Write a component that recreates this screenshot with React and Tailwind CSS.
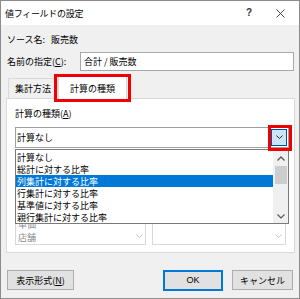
import React from 'react';

const items = ['計算なし', '総計に対する比率', '列集計に対する比率', '行集計に対する比率', '基準値に対する比率', '親行集計に対する比率'];

const Chevron = ({ color = '#333', size = 8 }) => (
  <svg width={size} height={size / 2 + 1} viewBox="0 0 8 5">
    <path d="M0.5 0.5 L4 4 L7.5 0.5" fill="none" stroke={color} strokeWidth="1.1" />
  </svg>
);

const ChevronUp = ({ color = '#333' }) => (
  <svg width="8" height="5" viewBox="0 0 8 5">
    <path d="M0.5 4.5 L4 1 L7.5 4.5" fill="none" stroke={color} strokeWidth="1.3" />
  </svg>
);

const App = () => {
  return (
    <div
      className="relative w-[300px] h-[299px] overflow-hidden border border-[#8c8c8c] bg-[#f0f0f0] text-[9px] leading-none text-black"
      style={{ fontFamily: "'Noto Sans CJK JP', 'Noto Sans', sans-serif" }}
    >
      {/* title bar */}
      <div className="h-[24px] bg-white flex items-center pl-[4px]">
        <span className="text-[9px] tracking-[-0.3px]">値フィールドの設定</span>
        <span className="ml-auto mr-[24px] text-[10px] font-bold text-[#333]" style={{ fontFamily: "'Liberation Sans', sans-serif" }}>?</span>
        <svg width="9" height="9" viewBox="0 0 9 9" className="mr-[14px]">
          <path d="M0.5 0.5 L8.5 8.5 M8.5 0.5 L0.5 8.5" stroke="#333" strokeWidth="0.9" />
        </svg>
      </div>

      <div className="px-[5px]">
        <div className="mt-[7px] h-[14px] flex items-center pl-[1px]">
          <span>ソース名:</span>
          <span className="ml-[6px]">販売数</span>
        </div>

        <div className="mt-[6px] h-[19px] flex items-center">
          <span className="pl-[1px]">
            名前の指定(<span className="underline">C</span>):
          </span>
          <div className="ml-auto w-[214px] h-[19px] bg-white border border-[#a8a8a8] flex items-center pl-[3px]">
            合計 / 販売数
          </div>
        </div>

        {/* tabs */}
        <div className="mt-[5px] h-[22px] flex items-end relative z-10">
          <div className="w-[50px] h-[20px] ml-[2px] border border-b-0 border-[#d9d9d9] flex items-center justify-center">
            集計方法
          </div>
          <div className="w-[69px] h-[23px] -mb-px bg-white border border-b-0 border-[#d9d9d9] flex items-center justify-center">
            計算の種類
          </div>
        </div>

        {/* tab panel */}
        <div className="w-[289px] h-[155px] bg-white border border-[#d9d9d9] px-[8px] pt-[7px]">
          <div className="h-[14px] flex items-center">
            計算の種類(<span className="underline">A</span>)
          </div>
          <div className="mt-[7px] w-[274px] h-[21px] border border-[#a0a0a0] flex items-center pl-[1px] pr-[1px]">
            <span>計算なし</span>
            <div className="ml-auto w-[16px] h-[17px] bg-[#cce4f7] border border-[#005499] flex items-center justify-center">
              <Chevron color="#222" size={7} />
            </div>
          </div>

          {/* base field / base item lists, mostly hidden behind the open dropdown */}
          <div className="mt-[24px] flex gap-[6px]">
            <div className="w-[134px] h-[73px] border border-[#d9d9d9] flex items-end">
              <div className="flex-1 flex flex-col text-[#8a8a8a] pl-[2px]">
                <span className="h-[13px] flex items-center">単価</span>
                <span className="h-[13px] flex items-center">店舗</span>
              </div>
              <div className="w-[12px] flex justify-center pb-[6px]">
                <Chevron color="#c4c4c4" size={7} />
              </div>
            </div>
            <div className="w-[136px] h-[73px] border border-[#d9d9d9] flex items-end justify-end pr-[3px] pb-[6px]">
              <Chevron color="#c4c4c4" size={7} />
            </div>
          </div>
        </div>

        {/* buttons */}
        <div className="mt-[17px] h-[20px] flex items-center">
          <button className="ml-[1px] w-[67px] h-[20px] bg-[#e1e1e1] border border-[#adadad] text-[9px]">
            表示形式(<span className="underline">N</span>)
          </button>
          <button
            className="ml-[89px] w-[60px] h-[21px] bg-[#e1e1e1] border-2 border-[#0078d7] text-[9px]"
            style={{ fontFamily: "'Liberation Sans', sans-serif" }}
          >
            OK
          </button>
          <button className="ml-[9px] w-[61px] h-[20px] bg-[#e1e1e1] border border-[#adadad] text-[9px]">
            キャンセル
          </button>
        </div>
      </div>

      {/* open dropdown list */}
      <div className="absolute left-[14px] top-[148px] w-[274px] h-[75px] bg-white border border-[#7a7a7a] flex z-20">
        <div className="flex-1 pt-[1px]">
          {items.map((item, i) => (
            <div
              key={item}
              className={`h-[12px] flex items-center pl-[1px] ${i === 2 ? 'bg-[#0078d7] text-white' : ''}`}
            >
              {item}
            </div>
          ))}
        </div>
        <div className="w-[15px] bg-[#f0f0f0] flex flex-col items-center">
          <div className="h-[16px] flex items-center justify-center">
            <ChevronUp color="#555" />
          </div>
          <div className="w-[12px] h-[18px] bg-[#cdcdcd]" />
          <div className="mt-auto h-[14px] flex items-center justify-center">
            <Chevron color="#555" size={8} />
          </div>
        </div>
      </div>

      {/* red highlight boxes */}
      <div className="absolute left-[53px] top-[73px] w-[77px] h-[28px] border-[3px] border-[#f00000] z-30" />
      <div className="absolute left-[267px] top-[124px] w-[24px] h-[26px] border-[3px] border-[#f00000] z-30" />
    </div>
  );
};

export default App;
